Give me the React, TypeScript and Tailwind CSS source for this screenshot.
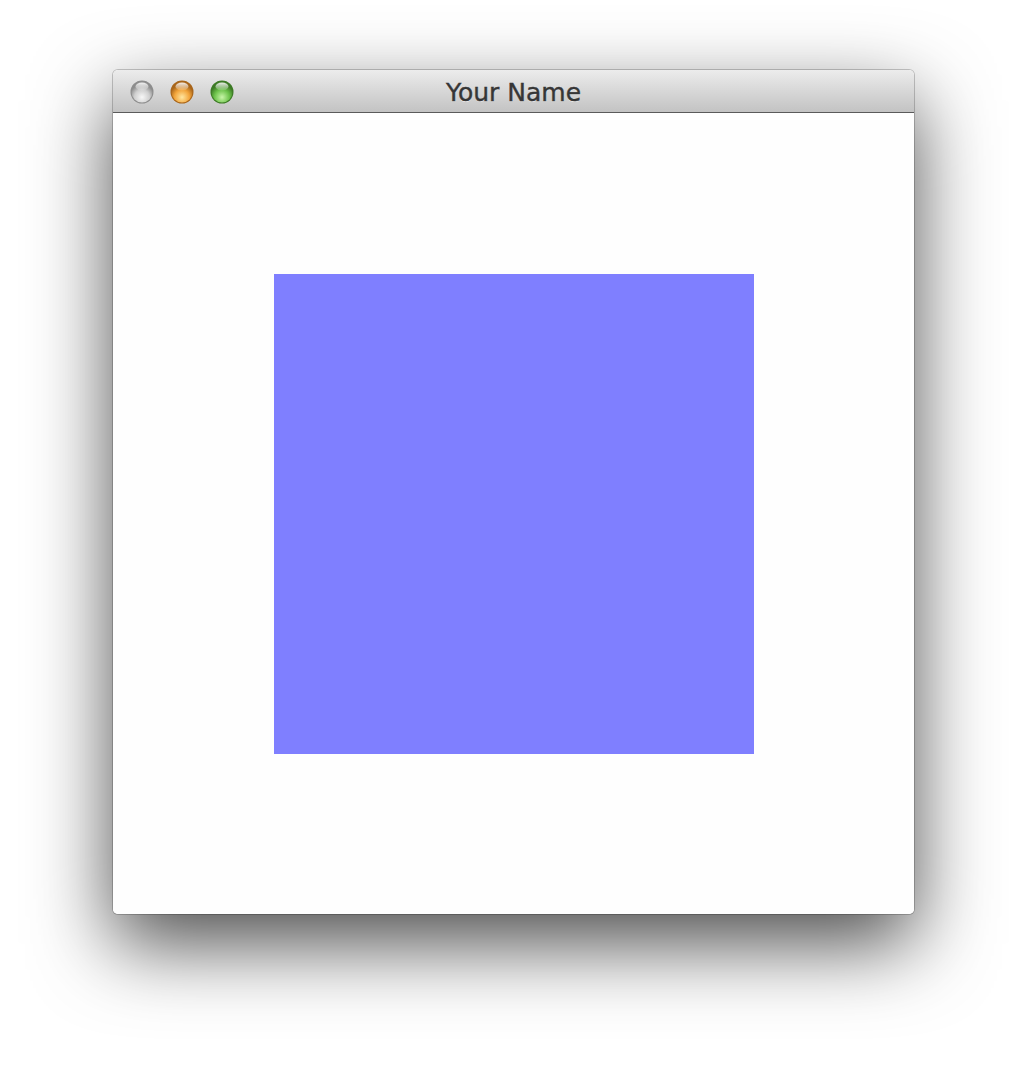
function Light({ id, base, dark, light }: { id: string; base: string; dark: string; light: string }) {
  return (
    <svg width="24" height="24" viewBox="0 0 24 24">
      <defs>
        <radialGradient id={`${id}-fill`} cx="50%" cy="75%" r="60%">
          <stop offset="0%" stopColor={light} />
          <stop offset="60%" stopColor={base} />
          <stop offset="100%" stopColor={dark} />
        </radialGradient>
        <linearGradient id={`${id}-shine`} x1="0" y1="0" x2="0" y2="1">
          <stop offset="0%" stopColor="#ffffff" stopOpacity="0.9" />
          <stop offset="100%" stopColor="#ffffff" stopOpacity="0.1" />
        </linearGradient>
      </defs>
      <circle cx="12" cy="12" r="11.5" fill={dark} />
      <circle cx="12" cy="12" r="10.5" fill={`url(#${id}-fill)`} />
      <ellipse cx="12" cy="6.5" rx="6.5" ry="4" fill={`url(#${id}-shine)`} />
    </svg>
  );
}

export default function App() {
  return (
    <div className="w-[1028px] h-[1072px] bg-white pt-[70px] pl-[113px]">
      <div className="w-[801px] rounded-[5px] overflow-hidden bg-white shadow-[0_30px_80px_0_rgba(0,0,0,0.7)] ring-1 ring-black/20">
        <div className="relative h-[43px] flex items-center bg-gradient-to-b from-[#ececec] to-[#c3c3c3] border-b border-[#5a5a5a]">
          <div className="flex items-center gap-[16px] pl-[17px] pt-[1px]">
            <Light id="close" base="#cfcfcf" dark="#8d8d8d" light="#f7f7f7" />
            <Light id="min" base="#f2a43a" dark="#a8651a" light="#ffe6a0" />
            <Light id="max" base="#6cc24a" dark="#3c7a25" light="#c8f5a8" />
          </div>
          <div className="absolute inset-0 flex items-center justify-center pt-[3px] pointer-events-none">
            <span className="text-[25px] text-[#363636] font-['DejaVu_Sans',sans-serif] [-webkit-text-stroke:0.4px_#363636] [text-shadow:0_1px_0_rgba(255,255,255,0.5)]">
              Your Name
            </span>
          </div>
        </div>
        <div className="h-[801px] flex justify-center pt-[161px] bg-[#fefefe]">
          <div className="w-[480px] h-[480px] bg-[#7f7fff]" />
        </div>
      </div>
    </div>
  );
}
